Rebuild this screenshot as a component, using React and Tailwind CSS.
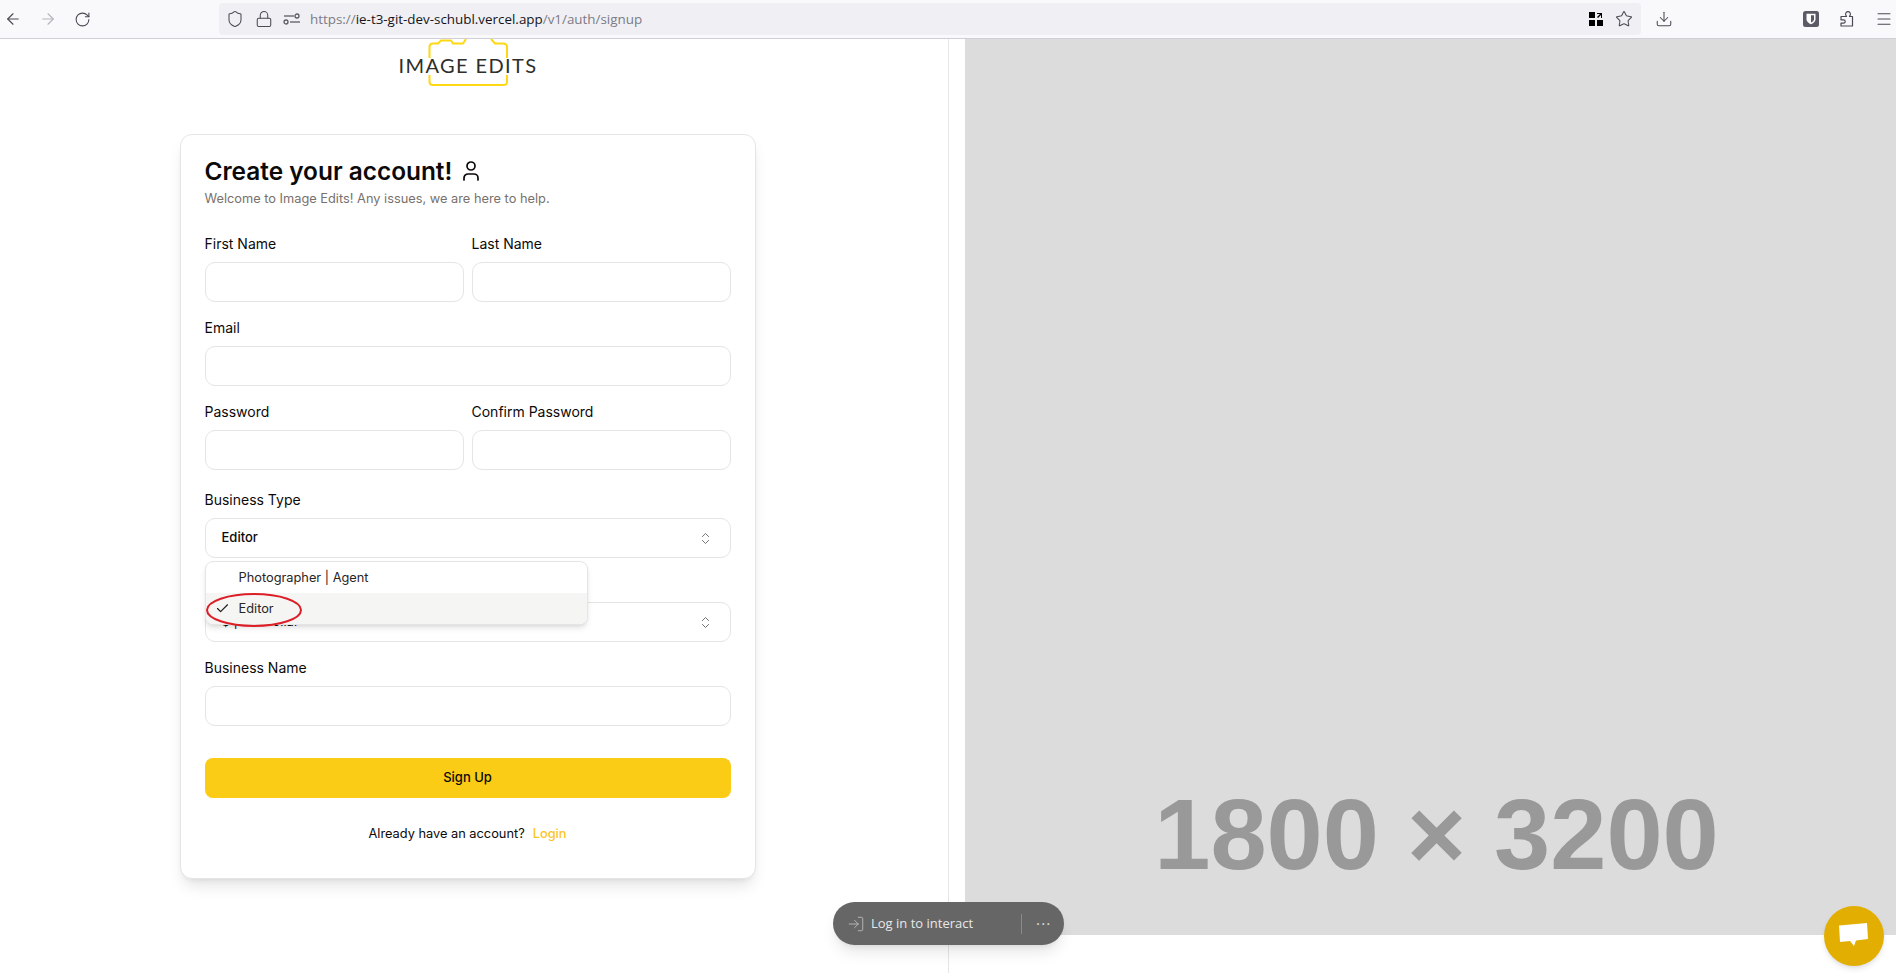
import { ArrowLeft, ArrowRight, RotateCw, Shield, Lock, Star, Download, Menu, User, ChevronsUpDown, Check, LogIn } from 'lucide-react';

const font = "font-['Inter',sans-serif]";

function PermissionsIcon() {
  return (
    <svg width="18" height="14" viewBox="0 0 18 14" fill="none" stroke="#5b5b66" strokeWidth="1.3">
      <path d="M1 4h10" />
      <circle cx="14" cy="4" r="2" />
      <circle cx="3" cy="10" r="2" />
      <path d="M7 10h10" />
    </svg>
  );
}

function QrIcon() {
  return (
    <svg width="14" height="14" viewBox="0 0 14 14" fill="#000">
      <rect x="0" y="0" width="6" height="6" />
      <rect x="0" y="8" width="6" height="6" />
      <rect x="8" y="8" width="6" height="6" />
      <path d="M8 1h5v5h-1V3L9 6 8 5l3-3H8z" />
    </svg>
  );
}

function VaultIcon() {
  return (
    <svg width="16" height="16" viewBox="0 0 16 16">
      <rect width="16" height="16" rx="2.5" fill="#5b5b66" />
      <path d="M3.500 2.800h9v5.400c0 2.600-2.400 4-4.500 5-2.100-1-4.500-2.400-4.500-5z" fill="#fff" />
      <path d="M8 4.200h3v4c0 1.500-1.500 2.500-3 3.300z" fill="#5b5b66" />
    </svg>
  );
}

function ExtensionIcon() {
  return (
    <svg width="16" height="16" viewBox="0 0 16 16" fill="none" stroke="currentColor" strokeWidth="1.2" strokeLinejoin="round">
      <path d="M2 5.500H7.500L6.800 4a2.400 2.400 0 1 1 4.400 0L10.500 5.500H13.500V15H2V12.200H4.500a1.700 1.700 0 0 0 0-3.400L2 8.800z" />
    </svg>
  );
}

function BrowserBar() {
  return (
    <div className="flex h-[39px] shrink-0 items-center border-b border-[#cfcfd8] bg-[#f9f9fb] text-[#4a4a55]">
      <div className="flex w-[219px] items-center gap-[17px] pl-[4px]">
        <ArrowLeft size={18} strokeWidth={1.5} />
        <ArrowRight size={18} strokeWidth={1.5} className="text-[#b4b4bb]" />
        <RotateCw size={17} strokeWidth={1.5} />
      </div>
      <div className="flex h-[32px] w-[1422px] items-center rounded-[4px] bg-[#f0f0f4] pl-[7px] pr-[8px]">
        <Shield size={18} strokeWidth={1.4} />
        <Lock size={18} strokeWidth={1.4} className="ml-[11px]" />
        <div className="ml-[10px]"><PermissionsIcon /></div>
        <div className="ml-[9px] font-['Open_Sans',sans-serif] text-[13.4px] text-[#7b7b85]">
          https://<span className="text-[#15141a]">ie-t3-git-dev-schubl.vercel.app</span>/v1/auth/signup
        </div>
        <div className="ml-auto flex items-center gap-[12px]">
          <QrIcon />
          <Star size={18} strokeWidth={1.4} />
        </div>
      </div>
      <Download size={18} strokeWidth={1.4} className="ml-[14px]" />
      <div className="ml-auto flex items-center gap-[20px] pr-[3px]">
        <VaultIcon />
        <ExtensionIcon />
        <Menu size={18} strokeWidth={1.4} />
      </div>
    </div>
  );
}

function Logo() {
  return (
    <div className="relative h-[47px] w-[138px]">
      <svg width="80" height="47" viewBox="0 0 80 47" fill="none" stroke="#fdd813" strokeWidth="2" className="absolute left-[29px] top-0">
        <path d="M1.500 19V8Q1.500 4.500 5 4.500H10L13 1.500H23L25 4.500H35L38 0" />
        <path d="M63 0L67 4.500H75Q79 4.500 79 8V19" />
        <path d="M1.500 36V43Q1.500 46 5 46H75Q79 46 79 43V36" />
      </svg>
      <div className="absolute left-0 top-[14px] whitespace-nowrap font-['Lato',sans-serif] text-[20px] font-normal leading-[24px] tracking-[1.4px] text-[#2e2e2a]">
        IMAGE EDITS
      </div>
    </div>
  );
}

function Field({ label, className, children }) {
  return (
    <div className={className}>
      <div className="mb-2 h-5 text-[14px] leading-5 text-[#0c0a09]">{label}</div>
      {children || <div className="h-10 rounded-[10px] border border-[#e7e5e4] bg-white" />}
    </div>
  );
}

function SelectBox({ value, bold }) {
  return (
    <div className="flex h-10 items-center justify-between rounded-[10px] border border-[#e7e5e4] bg-white pl-4 pr-[17px]">
      <span className={bold ? 'text-[13px] font-medium text-[#0c0a09]' : 'text-[13px] text-[#0c0a09]'}>{value}</span>
      <ChevronsUpDown size={15} strokeWidth={1.3} className="text-[#57534e]" />
    </div>
  );
}

function SignupCard() {
  return (
    <div className="mt-[48px] w-[576px] rounded-xl border border-[#e7e5e4] bg-white px-6 pt-[22px] pb-[34px] shadow-lg">
      <div className="flex h-7 items-center gap-[7px]">
        <h1 className="text-[24.4px] font-semibold leading-7 text-[#0c0a09]">Create your account!</h1>
        <User size={24} strokeWidth={1.7} className="text-[#0c0a09]" />
      </div>
      <p className="mt-[4px] h-5 text-[12.8px] leading-5 text-[#78716c]">Welcome to Image Edits! Any issues, we are here to help.</p>

      <div className="mt-[25px] flex flex-col gap-4">
        <div className="grid grid-cols-2 gap-2">
          <Field label="First Name" />
          <Field label="Last Name" />
        </div>
        <Field label="Email" />
        <div className="grid grid-cols-2 gap-2">
          <Field label="Password" />
          <Field label="Confirm Password" />
        </div>
        <Field label="Business Type" className="relative mt-1">
          <SelectBox value="Editor" bold />
          {/* open dropdown, sits over the next field */}
          <div className="absolute left-0 top-[71px] z-10 h-[64px] w-[383px] overflow-hidden rounded-[8px] border border-[#e7e5e4] bg-white shadow-md">
            <div className="flex h-[31px] items-center pl-[33px] text-[12.8px] text-[#292524]">Photographer | Agent</div>
            <div className="flex h-[31px] items-center bg-[#f5f5f4] text-[12.8px] text-[#292524]">
              <Check size={15} strokeWidth={1.8} className="ml-[9px] mr-[9px] text-[#1c1917]" />
              Editor
            </div>
          </div>
          <svg width="98" height="36" viewBox="0 0 98 36" fill="none" className="absolute left-0 top-[102px] z-20">
            <ellipse cx="49" cy="18" rx="47" ry="16" stroke="#dc1f26" strokeWidth="2" />
          </svg>
        </Field>
        <Field>
          <SelectBox value="$ | US Dollar" />
        </Field>
        <Field label="Business Name" />
      </div>

      <button className="mt-8 h-10 w-full rounded-lg bg-[#facc15] text-[13px] font-medium text-[#0c0a09]">Sign Up</button>
      <div className="mt-[26px] flex h-5 items-center justify-center gap-2 text-[12.8px] text-[#0c0a09]">
        <span>Already have an account?</span>
        <span className="font-medium text-[#fbc525]">Login</span>
      </div>
    </div>
  );
}

function Placeholder() {
  return (
    <div className="flex h-[896px] w-full items-end justify-center bg-[#dcdcdc] pb-[36px] pl-[12px]">
      <div className="font-['Liberation_Sans',sans-serif] text-[101px] font-bold leading-[130px] text-[#999999]">1800 × 3200</div>
    </div>
  );
}

export default function App() {
  return (
    <div className={`relative flex h-screen flex-col overflow-hidden bg-white ${font}`}>
      <BrowserBar />
      <div className="flex flex-1">
        <div className="flex w-[949px] shrink-0 flex-col items-center border-r border-[#e5e5e5] pr-[13px]">
          <Logo />
          <SignupCard />
        </div>
        <div className="flex-1 pl-[16px]">
          <Placeholder />
        </div>
      </div>

      {/* floating toolbar */}
      <div className="absolute left-[833px] top-[902px] flex h-[43px] w-[231px] items-center rounded-full bg-[#666666] pl-[14px] text-[#e8e8e8] shadow-lg">
        <LogIn size={18} strokeWidth={1.1} className="text-[#c4c4c4]" />
        <span className="ml-[6px] font-['Open_Sans',sans-serif] text-[13px]">Log in to interact</span>
        <div className="ml-[48px] h-5 w-px bg-[#8a8a8a]" />
        <span className="ml-[14px] mb-[8px] text-[14px] leading-none tracking-[1px]">...</span>
      </div>

      {/* chat bubble */}
      <div className="absolute left-[1824px] top-[906px] flex h-[60px] w-[60px] items-center justify-center rounded-full bg-[#e3ae02] shadow-md">
        <svg width="30" height="26" viewBox="0 0 30 26" fill="#fff">
          <path d="M0 2.500L28 0L29 16L17 17.500L15 23L11 18L1 19z" />
        </svg>
      </div>
    </div>
  );
}
